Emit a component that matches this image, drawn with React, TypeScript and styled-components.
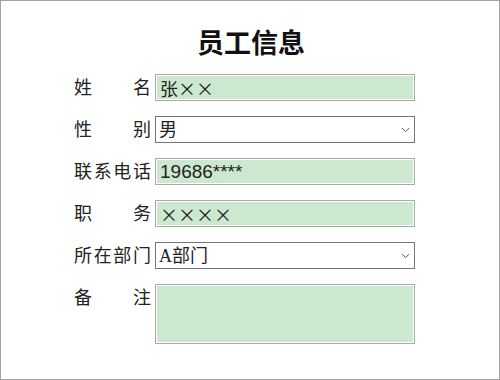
import React from 'react';
import styled, {createGlobalStyle} from 'styled-components';

const GlobalStyle = createGlobalStyle`
  html, body {
    margin: 0;
    padding: 0;
    background: #ffffff;
  }
  body {
    font-family: "Liberation Serif", "Noto Sans CJK SC", serif;
  }
`;

export const Frame = styled.div`
  width: 500px;
  height: 380px;
  box-sizing: border-box;
  border: 1px solid #a3a3a3;
  display: flex;
  flex-direction: column;
`;

export const Title = styled.h1`
  margin: 25px 0 0 0;
  padding-left: 2px;
  text-align: center;
  font-family: "Noto Sans CJK SC", sans-serif;
  font-weight: 700;
  font-size: 27px;
  line-height: 32px;
  color: #111;
`;

export const Form = styled.form`
  display: flex;
  flex-direction: column;
  gap: 15px;
  margin: 16px 0 0 0;
  padding-left: 73px;
`;

export const Row = styled.div`
  display: flex;
  align-items: flex-start;
  gap: 4px;
`;

export const Label = styled.label`
  width: 77px;
  flex: none;
  font-family: "Noto Sans CJK SC", sans-serif;
  font-size: 18px;
  line-height: 25px;
  color: #222;
  text-align: justify;
  text-align-last: justify;
`;

const fieldBase = `
  box-sizing: border-box;
  width: 260px;
  margin: 0;
  font-size: 18px;
  color: #222;
  outline: none;
`;

// $wide: CJK-style full-width glyphs (for the × placeholders)
export const TextInput = styled.input<{$wide?: boolean}>`
  ${fieldBase};
  height: 27px;
  padding: 0 4px;
  font-family: ${p => p.$wide
    ? '"Noto Sans CJK SC", sans-serif'
    : '"Liberation Sans", "Noto Sans CJK SC", sans-serif'};
  font-size: ${p => p.$wide ? '18px' : '19px'};
  font-feature-settings: ${p => p.$wide ? '"fwid" 1' : 'normal'};
  background: #cce8cf;
  border: 1px solid #a9a9a9;
  box-shadow: inset 0 0 0 1px #ffffff;
`;

export const TextArea = styled.textarea`
  ${fieldBase};
  height: 60px;
  padding: 3px 4px;
  resize: none;
  font-family: "Liberation Sans", "Noto Sans CJK SC", sans-serif;
  background: #cce8cf;
  border: 1px solid #a9a9a9;
  box-shadow: inset 0 0 0 1px #ffffff;
`;

export const SelectWrap = styled.div`
  position: relative;
  width: 260px;
  height: 27px;
`;

export const Select = styled.select`
  ${fieldBase};
  height: 27px;
  padding: 0 22px 0 3px;
  appearance: none;
  -webkit-appearance: none;
  font-family: "Liberation Serif", "Noto Sans CJK SC", serif;
  background: #ffffff;
  border: 1px solid #767676;
  border-radius: 0;
`;

export const Chevron = styled.svg`
  position: absolute;
  right: 5px;
  top: 11px;
  width: 9px;
  height: 6px;
  pointer-events: none;
`;

const Dropdown: React.FC<{value: string; options: string[]}> = ({value, options}) => (
    <SelectWrap>
        <Select defaultValue={value}>
            {options.map(o => <option key={o} value={o}>{o}</option>)}
        </Select>
        <Chevron viewBox="0 0 9 6">
            <path d="M1 1.2L4.5 4.6L8 1.2" fill="none" stroke="#555" strokeWidth="1"/>
        </Chevron>
    </SelectWrap>
);

const App: React.FC = () => {
    return (
        <>
            <GlobalStyle/>
            <Frame>
                <Title>员工信息</Title>
                <Form onSubmit={e => e.preventDefault()}>
                    <Row>
                        <Label>姓名</Label>
                        <TextInput $wide defaultValue="张××"/>
                    </Row>
                    <Row>
                        <Label>性别</Label>
                        <Dropdown value="男" options={['男', '女']}/>
                    </Row>
                    <Row>
                        <Label>联系电话</Label>
                        <TextInput defaultValue="19686****"/>
                    </Row>
                    <Row>
                        <Label>职务</Label>
                        <TextInput $wide defaultValue="××××"/>
                    </Row>
                    <Row>
                        <Label>所在部门</Label>
                        <Dropdown value="A部门" options={['A部门', 'B部门', 'C部门']}/>
                    </Row>
                    <Row>
                        <Label>备注</Label>
                        <TextArea/>
                    </Row>
                </Form>
            </Frame>
        </>
    );
};

export default App;
